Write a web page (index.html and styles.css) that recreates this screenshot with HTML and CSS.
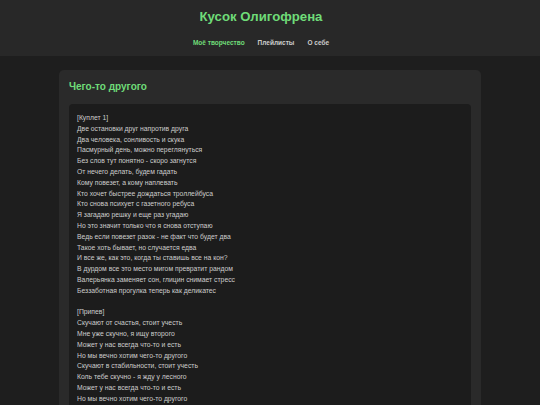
FILE: index.html
```html
<!DOCTYPE html>
<html lang="ru">
<head>
<meta charset="utf-8">
<title>Кусок Олигофрена</title>
<link rel="stylesheet" href="styles.css">
</head>
<body>
<header class="site-header">
  <h1 class="site-title">Кусок Олигофрена</h1>
  <nav class="site-nav">
    <a class="nav-link active" href="#">Моё творчество</a>
    <a class="nav-link" href="#">Плейлисты</a>
    <a class="nav-link" href="#">О себе</a>
  </nav>
</header>
<main class="content">
  <section class="card">
    <h2 class="card-title">Чего-то другого</h2>
    <div class="lyrics">
<p>[Куплет 1]<br>
Две остановки друг напротив друга<br>
Два человека, сонливость и скука<br>
Пасмурный день, можно переглянуться<br>
Без слов тут понятно - скоро загнутся<br>
От нечего делать, будем гадать<br>
Кому повезет, а кому наплевать<br>
Кто хочет быстрее дождаться троллейбуса<br>
Кто снова психует с газетного ребуса<br>
Я загадаю решку и еще раз угадаю<br>
Но это значит только что я снова отступаю<br>
Ведь если повезет разок - не факт что будет два<br>
Такое хоть бывает, но случается едва<br>
И все же, как это, когда ты ставишь все на кон?<br>
В дурдом все это место мигом превратит рандом<br>
Валерьянка заменяет сон, глицин снимает стресс<br>
Беззаботная прогулка теперь как деликатес</p>
<p>[Припев]<br>
Скучают от счастья, стоит учесть<br>
Мне уже скучно, я ищу второго<br>
Может у нас всегда что-то и есть<br>
Но мы вечно хотим чего-то другого<br>
Скучают в стабильности, стоит учесть<br>
Коль тебе скучно - я жду у лесного<br>
Может у нас всегда что-то и есть<br>
Но мы вечно хотим чего-то другого</p>
    </div>
  </section>
</main>
</body>
</html>
```
FILE: styles.css
```css
html, body {
  margin: 0;
  padding: 0;
}
body {
  background: #1e1e1e;
  font-family: "Liberation Sans", Arial, sans-serif;
  color: #cccccc;
}
.site-header {
  background: #282828;
  height: 56px;
  display: flex;
  flex-direction: column;
  align-items: center;
  padding: 9px 18px 0 0;
  box-sizing: border-box;
}
.site-title {
  margin: 0;
  font-size: 13.2px;
  line-height: 16px;
  color: #6fdc78;
  font-weight: bold;
}
.site-nav {
  display: flex;
  gap: 13px;
  margin-top: 13px;
}
.nav-link {
  font-size: 6.5px;
  font-weight: bold;
  color: #cccccc;
  text-decoration: none;
  line-height: 9px;
}
.nav-link.active {
  color: #6fdc78;
}
.content {
  padding: 14px 59px 0 59px;
}
.card {
  background: #2a2a2a;
  border-radius: 5px;
  padding: 10px 10px 10px 10px;
}
.card-title {
  margin: 0 0 10px 0;
  font-size: 10px;
  line-height: 14px;
  color: #6fdc78;
  font-weight: bold;
}
.lyrics {
  background: #1c1c1c;
  border-radius: 4px;
  padding: 9px 8px 7px 8px;
  font-size: 6.8px;
  line-height: 10.8px;
  color: #cccccc;
}
.lyrics p {
  margin: 0 0 10.8px 0;
}
```
